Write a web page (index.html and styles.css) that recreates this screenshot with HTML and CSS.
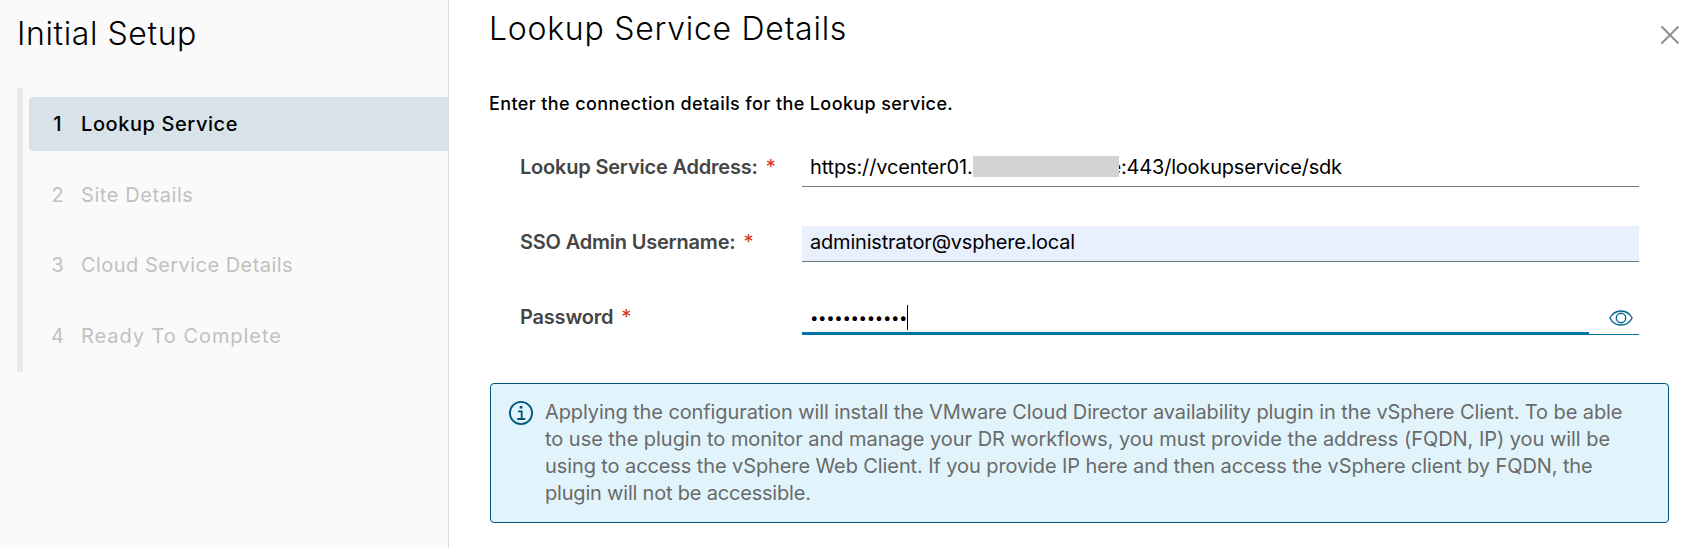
FILE: index.html
```html
<!DOCTYPE html>
<html lang="en">

<head>
  <meta charset="UTF-8" />
  <title>Initial Setup</title>
  <link rel="stylesheet" href="styles.css">
</head>

<body>

  <div class="wizard">
    <nav class="sidebar">
      <h1 class="wizard-title">Initial Setup</h1>
      <ol class="steps">
        <li class="step active"><span class="num">1</span><span class="step-lookup">Lookup Service</span></li>
        <li class="step"><span class="num">2</span><span class="step-site">Site Details</span></li>
        <li class="step"><span class="num">3</span><span class="step-cloud">Cloud Service Details</span></li>
        <li class="step"><span class="num">4</span><span class="step-ready">Ready To Complete</span></li>
      </ol>
    </nav>

    <main class="content">
      <div class="header">
        <h2 class="page-title">Lookup Service Details</h2>
        <svg class="close" viewBox="0 0 20 20">
          <path d="M1.5 1.5 L18.5 18.5 M18.5 1.5 L1.5 18.5" />
        </svg>
      </div>

      <p class="intro">Enter the connection details for the Lookup service.</p>

      <form class="fields">
        <div class="form-group">
          <label>Lookup Service Address:<span class="required">*</span></label>
          <div class="input"><span class="host">https://vcenter01.</span><span class="redacted"></span><span class="path">e:443/lookupservice/sdk</span></div>
        </div>

        <div class="form-group">
          <label>SSO Admin Username:<span class="required">*</span></label>
          <div class="input autofill"><span class="user">administrator@vsphere.local</span></div>
        </div>

        <div class="form-group">
          <label>Password<span class="required">*</span></label>
          <div class="input-group">
            <div class="input password"><span class="dots">••••••••••••</span><span class="caret"></span></div>
            <div class="toggle">
              <svg class="eye" viewBox="0 0 24 16">
                <path d="M0.9 8 C5.8 -1.4 18.2 -1.4 23.1 8 C18.2 17.4 5.8 17.4 0.9 8 Z" />
                <circle cx="12" cy="8" r="4.7" />
              </svg>
            </div>
          </div>
        </div>
      </form>

      <div class="alert">
        <svg class="info" viewBox="0 0 24 24">
          <circle cx="12" cy="12" r="11.1" />
          <path d="M9 10.3 H12.7 V18 M8.2 18 H16.2" />
          <rect x="10.7" y="5" width="2.7" height="2.5" />
        </svg>
        <p class="alert-text">
          <span class="line1">Applying the configuration will install the VMware Cloud Director availability plugin in the vSphere Client. To be able</span><br>
          <span class="line2">to use the plugin to monitor and manage your DR workflows, you must provide the address (FQDN, IP) you will be</span><br>
          <span class="line3">using to access the vSphere Web Client. If you provide IP here and then access the vSphere client by FQDN, the</span><br>
          <span class="line4">plugin will not be accessible.</span>
        </p>
      </div>
    </main>
  </div>

</body>

</html>
```
FILE: styles.css
```css
* {
  box-sizing: border-box;
}

body {
  margin: 0;
  font-family: Inter, "Open Sans", sans-serif;
  font-size: 20px;
  color: #000;
  background: #fff;
}

.wizard {
  display: flex;
  height: 548px;
  overflow: hidden;
}

/* left side */
.sidebar {
  width: 449px;
  padding: 14px 0 0 17px;
  background: #fafafa;
  border-right: 1px solid #d8d8d8;
}

.wizard-title,
.page-title {
  margin: 0;
  font-size: 32px;
  font-weight: 300;
  line-height: 40px;
  letter-spacing: 0.6px;
  white-space: nowrap;
}

.page-title {
  margin-left: -1px;
  letter-spacing: 0.74px;
}

.steps {
  list-style: none;
  margin: 34px 0 0;
  padding: 9px 0 9px 6px;
  border-left: 6px solid #e8e8e8;
  height: 284px;
  display: flex;
  flex-direction: column;
  justify-content: space-between;
}

.step {
  display: flex;
  align-items: center;
  height: 54px;
  padding-left: 16px;
  color: #c1c1c1;
  border-radius: 4px 0 0 4px;
}

.step.active {
  background: #d8e3e9;
  color: #000;
  font-weight: 500;
}

.num {
  width: 25px;
  margin-right: 11px;
  text-align: center;
}

.step-lookup,
.step-site {
  letter-spacing: 0.58px;
}

.step-cloud {
  letter-spacing: 0.46px;
}

.step-ready {
  letter-spacing: 0.95px;
}

/* right side */
.content {
  flex: 1;
  padding: 9px 25px 0 41px;
}

.header {
  display: flex;
  justify-content: space-between;
}

.close {
  width: 20px;
  height: 20px;
  margin: 16px -11px 0 0;
  fill: none;
  stroke: #8c8c8c;
  stroke-width: 1.8;
}

.intro {
  margin: 43px 0 0 -1px;
  font-size: 18px;
  font-weight: 500;
  line-height: 24px;
  letter-spacing: 0.39px;
  white-space: nowrap;
}

.fields {
  margin: 35px 30px 0;
}

.form-group {
  display: flex;
  height: 36px;
  margin-bottom: 39px;
}

.form-group label {
  width: 282px;
  font-weight: 600;
  line-height: 33px;
  letter-spacing: -0.2px;
  color: #454545;
  white-space: nowrap;
}

.required {
  margin-left: 8px;
  color: #d4361a;
  font-weight: 400;
}

.input {
  flex: 1;
  display: flex;
  padding-left: 8px;
  line-height: 33px;
  border-bottom: 1px solid #6a7a81;
  white-space: nowrap;
}

.autofill {
  background: #e8effd;
}

.host {
  letter-spacing: -0.15px;
}

.path,
.user {
  letter-spacing: -0.2px;
}

/* covers the private part of the host name */
.redacted {
  width: 146px;
  height: 21px;
  margin: 5px -9px 0 0;
  background: #d1d3d4;
  z-index: 1;
}

.input-group {
  flex: 1;
  display: flex;
  height: 34px;
}

.password {
  border-bottom: 3px solid #0072a3;
}

.dots {
  font-size: 15px;
  letter-spacing: -0.34px;
}

.caret {
  width: 1px;
  height: 25px;
  margin-top: 4px;
  background: #000;
}

.toggle {
  width: 50px;
  padding: 9px 0 0 20px;
  border-bottom: 1px solid #0072a3;
}

.eye {
  display: block;
  width: 24px;
  height: 16px;
  fill: none;
  stroke: #00648f;
  stroke-width: 1.4;
}

.alert {
  display: flex;
  height: 140px;
  margin-top: 46px;
  padding: 15px 0 0 18px;
  background: #e1f4fb;
  border: 1px solid #00567a;
  border-radius: 4px;
}

.info {
  width: 24px;
  height: 24px;
  margin: 2px 12px 0 0;
  fill: none;
  stroke: #00567a;
  stroke-width: 1.8;
}

.info rect {
  fill: #00567a;
  stroke: none;
}

.alert-text {
  margin: 0;
  line-height: 27px;
  color: #6a6a6a;
  white-space: nowrap;
}

.line1,
.line3 {
  letter-spacing: -0.1px;
}

.line2 {
  letter-spacing: -0.04px;
}

.line4 {
  letter-spacing: -0.2px;
}
```
